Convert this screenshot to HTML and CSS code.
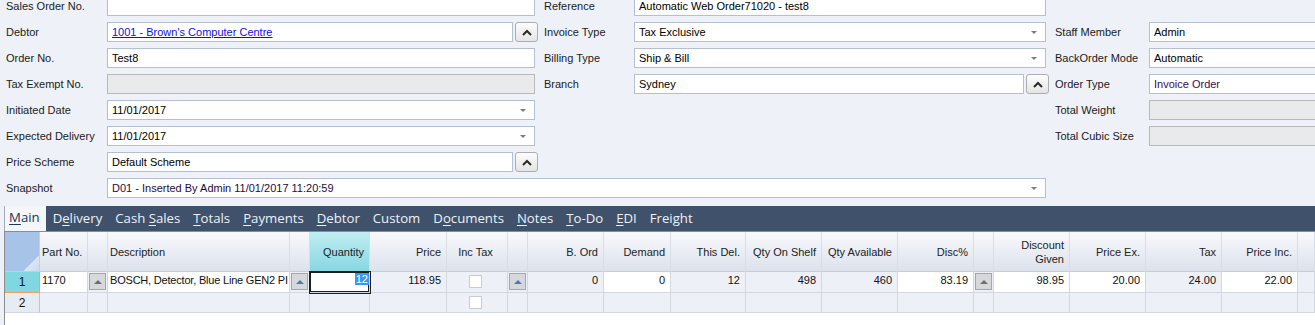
FILE: index.html
```html
<html>
<head>
  <meta charset="utf-8">
  <link rel="stylesheet" href="styles.css">
</head>
<body>

  <div class="form">
    <span class="lbl">Sales Order No.</span>
    <div class="field"></div>
    <span class="lbl c3">Reference</span>
    <div class="field">Automatic Web Order71020 - test8</div>

    <span class="lbl">Debtor</span>
    <div class="pick">
      <div class="field"><a class="link">1001 - Brown's Computer Centre</a></div>
      <button class="up"><svg width="10" height="7" viewBox="0 0 10 7"><path d="M1 6 L5 2 L9 6" fill="none" stroke="#2a2a2a" stroke-width="2"/></svg></button>
    </div>
    <span class="lbl c3">Invoice Type</span>
    <div class="field combo"><span>Tax Exclusive</span><i class="arrow"></i></div>
    <span class="lbl c5">Staff Member</span>
    <div class="field">Admin</div>

    <span class="lbl">Order No.</span>
    <div class="field">Test8</div>
    <span class="lbl c3">Billing Type</span>
    <div class="field combo"><span>Ship &amp; Bill</span><i class="arrow"></i></div>
    <span class="lbl c5">BackOrder Mode</span>
    <div class="field">Automatic</div>

    <span class="lbl">Tax Exempt No.</span>
    <div class="field off"></div>
    <span class="lbl c3">Branch</span>
    <div class="pick">
      <div class="field">Sydney</div>
      <button class="up"><svg width="10" height="7" viewBox="0 0 10 7"><path d="M1 6 L5 2 L9 6" fill="none" stroke="#2a2a2a" stroke-width="2"/></svg></button>
    </div>
    <span class="lbl c5">Order Type</span>
    <div class="field purple">Invoice Order</div>

    <span class="lbl">Initiated Date</span>
    <div class="field combo"><span>11/01/2017</span><i class="arrow"></i></div>
    <span class="lbl c5">Total Weight</span>
    <div class="field off"></div>

    <span class="lbl">Expected Delivery</span>
    <div class="field combo"><span>11/01/2017</span><i class="arrow"></i></div>
    <span class="lbl c5">Total Cubic Size</span>
    <div class="field off"></div>

    <span class="lbl">Price Scheme</span>
    <div class="pick">
      <div class="field">Default Scheme</div>
      <button class="up"><svg width="10" height="7" viewBox="0 0 10 7"><path d="M1 6 L5 2 L9 6" fill="none" stroke="#2a2a2a" stroke-width="2"/></svg></button>
    </div>

    <span class="lbl">Snapshot</span>
    <div class="field combo span3 plum"><span>D01 - Inserted By Admin 11/01/2017 11:20:59</span><i class="arrow"></i></div>
  </div>

  <div class="tabs">
    <span class="tab on"><u>M</u>ain</span>
    <span class="tab">D<u>e</u>livery</span>
    <span class="tab">Cash <u>S</u>ales</span>
    <span class="tab"><u>T</u>otals</span>
    <span class="tab"><u>P</u>ayments</span>
    <span class="tab"><u>D</u>ebtor</span>
    <span class="tab">Custom</span>
    <span class="tab">D<u>o</u>cuments</span>
    <span class="tab"><u>N</u>otes</span>
    <span class="tab"><u>T</u>o-Do</span>
    <span class="tab"><u>E</u>DI</span>
    <span class="tab">Freight</span>
  </div>

  <div class="grid">
    <div class="row head">
      <div class="cell corner"></div>
      <div class="cell left">Part No.</div>
      <div class="cell"></div>
      <div class="cell left">Description</div>
      <div class="cell"></div>
      <div class="cell hot">Quantity</div>
      <div class="cell">Price</div>
      <div class="cell mid">Inc Tax</div>
      <div class="cell"></div>
      <div class="cell">B. Ord</div>
      <div class="cell">Demand</div>
      <div class="cell">This Del.</div>
      <div class="cell">Qty On Shelf</div>
      <div class="cell">Qty Available</div>
      <div class="cell">Disc%</div>
      <div class="cell"></div>
      <div class="cell two">Discount<br>Given</div>
      <div class="cell">Price Ex.</div>
      <div class="cell">Tax</div>
      <div class="cell">Price Inc.</div>
      <div class="cell"></div>
    </div>

    <div class="row line">
      <div class="cell rh cur">1</div>
      <div class="cell w left">1170</div>
      <div class="cell btn"><span class="gbtn"><i class="tri"></i></span></div>
      <div class="cell w left desc">BOSCH, Detector, Blue Line GEN2 PI</div>
      <div class="cell btn"><span class="gbtn"><i class="tri blue"></i></span></div>
      <div class="cell w edit"><span class="sel">12</span></div>
      <div class="cell">118.95</div>
      <div class="cell mid"><span class="chk"></span></div>
      <div class="cell btn"><span class="gbtn"><i class="tri blue"></i></span></div>
      <div class="cell">0</div>
      <div class="cell w">0</div>
      <div class="cell">12</div>
      <div class="cell">498</div>
      <div class="cell">460</div>
      <div class="cell w">83.19</div>
      <div class="cell btn"><span class="gbtn"><i class="tri"></i></span></div>
      <div class="cell w">98.95</div>
      <div class="cell w">20.00</div>
      <div class="cell">24.00</div>
      <div class="cell w">22.00</div>
      <div class="cell"></div>
    </div>

    <div class="row line">
      <div class="cell rh">2</div>
      <div class="cell"></div>
      <div class="cell"></div>
      <div class="cell"></div>
      <div class="cell"></div>
      <div class="cell"></div>
      <div class="cell"></div>
      <div class="cell mid"><span class="chk"></span></div>
      <div class="cell"></div>
      <div class="cell"></div>
      <div class="cell"></div>
      <div class="cell"></div>
      <div class="cell"></div>
      <div class="cell"></div>
      <div class="cell"></div>
      <div class="cell"></div>
      <div class="cell"></div>
      <div class="cell"></div>
      <div class="cell"></div>
      <div class="cell"></div>
      <div class="cell"></div>
    </div>
  </div>

</body>
</html>
```

FILE: styles.css
```css
html, body {
  margin: 0;
  overflow: hidden;
}
body {
  width: 1315px;
  height: 325px;
  background-color: #eef1f8;
  font-family: 'Liberation Sans', Arial, sans-serif;
  font-size: 11px;
  color: #1b1b1b;
}

/* header form */
.form {
  display: grid;
  grid-template-columns: 101px 428px 99px 412px 103px 180px;
  grid-auto-rows: 20px;
  row-gap: 6px;
  padding-left: 6px;
  margin-top: -4px;
}
.lbl {
  grid-column: 1;
  line-height: 20px;
  white-space: nowrap;
}
.lbl.c3 {
  grid-column: 3;
  padding-left: 9px;
}
.lbl.c5 {
  grid-column: 5;
  padding-left: 9px;
}
.field {
  box-sizing: border-box;
  height: 20px;
  border: 1px solid #b4bfd1;
  background-color: #fff;
  line-height: 18px;
  padding: 0 4px;
  white-space: nowrap;
  overflow: hidden;
  color: #000;
}
.field.off {
  background-color: #e9eaec;
  border-color: #b9b9b9;
}
.purple {
  color: #3d0a55;
}
.plum {
  color: #2a0a3a;
}
.span3 {
  grid-column: span 3;
}
.combo {
  display: flex;
  align-items: center;
}
.combo span {
  flex: 1;
}
.arrow {
  width: 0;
  height: 0;
  margin-right: 4px;
  border-left: 3px solid transparent;
  border-right: 3px solid transparent;
  border-top: 3px solid #7d7d7d;
}
.link {
  color: #1111dd;
  text-decoration: underline;
}
.pick {
  display: flex;
  gap: 2px;
  margin-right: -3px;
}
.pick .field {
  flex: 1;
}
.up {
  box-sizing: border-box;
  width: 23px;
  height: 20px;
  padding: 0;
  border: 1px solid #adadad;
  border-radius: 3px;
  background: linear-gradient(#fdfdfd, #e4e4e4);
  display: flex;
  align-items: center;
  justify-content: center;
}

/* tab strip */
.tabs {
  display: flex;
  height: 25px;
  margin: 8px 0 0 4px;
  background-color: #3f516b;
  font-family: 'Open Sans', sans-serif;
  font-size: 13.2px;
  color: #eef2f8;
}
.tab {
  padding: 0 6px 0 7px;
  line-height: 25px;
  white-space: nowrap;
}
.tab u {
  text-underline-offset: 2px;
}
.tab.on {
  background-color: #f4f6fa;
  color: #213757;
  border-left: 1px solid #a2abb9;
  padding: 0 6px 0 4px;
  line-height: 23px;
}

/* lines grid */
.grid {
  height: 94px;
  margin-left: 4px;
  border-left: 1px solid #8d8d8d;
  border-top: 1px solid #8d8d8d;
  background-color: #fff;
}
.row {
  display: grid;
  grid-template-columns: 35px 48px 20px 182px 20px 60px 77px 61px 20px 76px 67px 75px 76px 76px 76px 20px 76px 76px 76px 76px 1fr;
}
.cell {
  box-sizing: border-box;
  border-right: 1px solid #d3d8e0;
  border-bottom: 1px solid #d3d8e0;
  background-color: #edf0f7;
  padding: 0 5px 0 2px;
  white-space: nowrap;
  overflow: hidden;
  text-align: right;
}
.head .cell {
  height: 40px;
  background: linear-gradient(#f8f9fc, #dce2ec);
  border-right-color: #d9dee6;
  border-bottom-color: #c6cdd8;
  display: flex;
  align-items: center;
  justify-content: flex-end;
  color: #222;
}
.head .cell.left {
  justify-content: flex-start;
}
.head .cell.mid {
  justify-content: center;
}
.head .cell.two {
  line-height: 14px;
}
.head .cell.hot {
  background: linear-gradient(#c0eef2, #86d7e2);
}
.head .cell.corner {
  background: linear-gradient(135deg, #a7c3e8 0%, #a7c3e8 78%, #dbe6f5 79%, #c9daf0 100%);
  border-right-color: #c4cfdf;
}
.line .cell {
  height: 21px;
  line-height: 16px;
  font-size: 11px;
  color: #111;
}
.line + .line .cell {
  height: 20px;
}
.cell.left {
  text-align: left;
}
.cell.mid {
  text-align: center;
}
.cell.w {
  background-color: #fff;
}
.cell.desc {
  padding-right: 0;
  letter-spacing: -0.2px;
}
.cell.rh {
  text-align: center;
  line-height: 21px;
  font-size: 12px;
  padding: 0;
  background-color: #e7ebf3;
  border-right-color: #bcc5d3;
}
.cell.rh.cur {
  background-color: #80d6e1;
  border-right-color: #eea55a;
  border-bottom-color: #eea55a;
}
.cell.btn {
  padding: 1px 0 0 1px;
}
.gbtn {
  box-sizing: border-box;
  width: 17px;
  height: 17px;
  border: 1px solid #a6a6a6;
  background-color: #d6d8dc;
  display: flex;
  align-items: center;
  justify-content: center;
}
.tri {
  width: 0;
  height: 0;
  border-left: 4px solid transparent;
  border-right: 4px solid transparent;
  border-bottom: 4px solid #6e6e6e;
}
.tri.blue {
  border-bottom-color: #4f78b4;
}
.cell.edit {
  position: relative;
  z-index: 1;
  padding: 0 0 0 2px;
  box-shadow: 0 0 0 1px #1e1e1e, inset 0 0 0 1px #1e1e1e;
}
.sel {
  display: inline-block;
  margin-top: 1px;
  padding: 0 1px;
  line-height: 12px;
  background-color: #3399ff;
  color: #fff;
}
.chk {
  display: inline-block;
  box-sizing: border-box;
  width: 13px;
  height: 13px;
  margin-top: 3px;
  border: 1px solid #c9ccd2;
  background-color: #fff;
}
```
